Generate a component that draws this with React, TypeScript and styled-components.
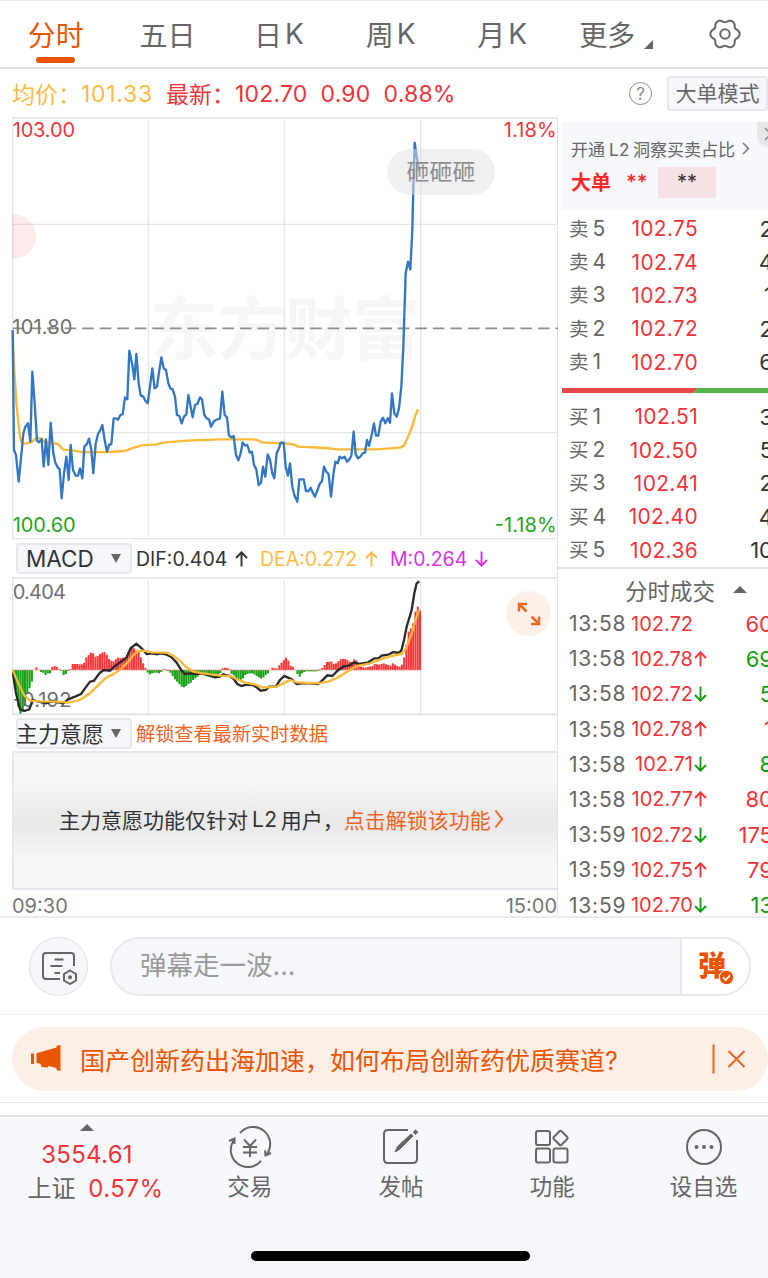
import React from "react";
import styled, { createGlobalStyle } from "styled-components";

const tabs = ["分时", "五日", "日K", "周K", "月K"];

const sellData = [
  { id: 5, price: "102.75", vol: "2" },
  { id: 4, price: "102.74", vol: "4" },
  { id: 3, price: "102.73", vol: "1" },
  { id: 2, price: "102.72", vol: "2" },
  { id: 1, price: "102.70", vol: "6" },
];

const buyData = [
  { id: 1, price: "102.51", vol: "3" },
  { id: 2, price: "102.50", vol: "5" },
  { id: 3, price: "102.41", vol: "2" },
  { id: 4, price: "102.40", vol: "4" },
  { id: 5, price: "102.36", vol: "10" },
];

const dealData = [
  { id: 1, time: "13:58", price: "102.72", dir: "", vol: "60", up: true },
  { id: 2, time: "13:58", price: "102.78", dir: "up", vol: "69", up: false },
  { id: 3, time: "13:58", price: "102.72", dir: "down", vol: "5", up: false },
  { id: 4, time: "13:58", price: "102.78", dir: "up", vol: "1", up: true },
  { id: 5, time: "13:58", price: "102.71", dir: "down", vol: "8", up: false },
  { id: 6, time: "13:58", price: "102.77", dir: "up", vol: "80", up: true },
  { id: 7, time: "13:59", price: "102.72", dir: "down", vol: "175", up: true },
  { id: 8, time: "13:59", price: "102.75", dir: "up", vol: "79", up: true },
  { id: 9, time: "13:59", price: "102.70", dir: "down", vol: "13", up: false },
];

const pricePoints =
  "38,150 42,510 48,525 56,605 64,525 70,460 76,440 84,430 91,485 97,275 104,370 111,482 117,487 125,478 131,560 138,478 145,555 152,428 160,520 166,548 173,562 179,568 185,655 192,580 199,530 206,600 212,495 219,570 227,587 234,587 240,565 247,595 253,500 260,493 267,476 274,510 280,580 287,492 294,462 301,450 307,435 314,480 321,515 328,493 334,493 341,415 348,415 354,419 361,405 368,403 375,352 382,358 388,212 397,255 403,298 409,222 416,310 422,346 430,350 436,362 443,370 450,320 457,265 464,325 471,320 478,270 484,232 491,265 498,270 505,310 511,325 518,328 525,350 531,405 538,408 545,430 552,410 559,403 565,345 572,380 578,412 585,375 592,372 600,352 606,358 613,405 620,415 627,418 633,440 641,425 648,420 660,415 667,335 674,405 681,412 687,467 694,472 701,468 708,525 715,541 722,520 728,487 735,497 742,495 749,518 756,515 762,555 769,568 776,615 783,608 789,560 796,590 803,523 810,540 817,580 823,595 830,520 837,505 842,488 851,488 857,560 864,587 870,550 877,620 884,648 892,665 898,598 911,598 918,633 926,633 932,623 938,638 945,650 952,632 959,612 966,603 972,560 979,575 986,583 993,650 1000,585 1006,545 1013,550 1019,530 1026,535 1034,530 1041,545 1048,538 1054,528 1061,455 1067,523 1074,535 1081,530 1088,520 1095,518 1101,480 1107,498 1115,465 1122,430 1128,467 1135,467 1142,425 1149,413 1156,430 1163,415 1170,428 1176,340 1183,400 1190,410 1197,385 1204,320 1210,200 1217,-20 1224,-55 1231,-32 1237,-150 1240,-280 1244,-412 1250,-370 1257,-328";

const avgPoints =
  "38,160 42,260 50,380 60,470 66,492 90,488 110,475 125,475 135,488 175,492 188,508 215,511 255,517 320,516 375,513 395,505 425,496 470,493 490,488 560,482 660,478 760,478 774,481 785,487 860,491 880,493 895,500 980,504 1010,508 1060,508 1130,508 1200,503 1212,497 1220,480 1235,445 1245,410 1252,392 1258,390";

const difPoints =
  "38,395 48,460 60,508 72,513 88,508 98,480 115,485 138,490 155,484 170,486 190,490 205,478 225,470 243,462 255,445 270,425 282,422 300,398 312,390 330,392 345,378 362,366 380,352 392,325 409,311 425,325 440,342 458,340 470,343 480,340 498,343 515,352 530,368 545,392 555,402 570,400 590,402 605,400 625,406 645,412 660,410 670,403 690,408 702,418 712,432 725,438 740,434 758,435 770,442 782,452 797,450 808,440 828,440 840,420 853,408 875,418 890,432 905,430 930,430 955,432 970,418 982,406 997,408 1015,390 1030,380 1048,376 1063,367 1078,372 1105,367 1123,355 1135,355 1145,347 1165,344 1180,336 1195,339 1204,332 1212,300 1220,260 1235,210 1243,160 1250,130 1258,124";

const deaPoints =
  "38,390 55,430 72,465 90,482 120,484 170,485 205,488 240,480 270,460 300,430 320,412 345,400 365,385 385,365 400,345 415,333 430,332 455,337 500,338 520,347 540,363 560,382 580,395 610,400 660,407 690,408 712,418 735,428 760,432 790,443 830,440 850,430 870,420 890,427 955,430 985,425 1015,412 1050,390 1070,378 1110,370 1150,355 1175,348 1205,342 1218,325 1235,280 1250,230 1258,208";

// one value per minute, above zero is red and below is green
const macdBars = [
  -10, -60, -110, -131, -120, -108, -70, -55, -35, 0, 8, 0, -6, -8, -15, -10,
  -10, 9, 12, 9, 2, -3, -15, -12, -3, 3, 18, 18, 18, 17, 17, 22, 38, 45, 52, 50,
  40, 42, 48, 52, 54, 46, 33, 28, 26, 32, 37, 36, 37, 36, 45, 55, 65, 65, 58, 55,
  38, 20, 6, -8, -13, -10, -8, -8, -10, -6, 2, 2, -3, -8, -18, -28, -35, -42,
  -50, -52, -48, -42, -38, -30, -25, -20, -12, -8, -10, -12, -12, -12, -12, -12,
  -12, -10, 5, 7, 6, 3, -12, -16, -24, -28, -30, -25, -15, -12, -10, -10, -13,
  -18, -22, -26, -22, -15, -10, 0, 7, 5, 4, 14, 22, 30, 37, 28, 13, 10, 0, -12,
  -20, -10, -6, -4, -4, -4, -4, -4, -3, 2, 6, 15, 24, 25, 25, 18, 20, 26, 32, 33,
  33, 30, 25, 24, 32, 28, 18, 10, 8, 7, 9, 10, 12, 18, 17, 16, 18, 20, 17, 15,
  13, 20, 16, 12, 10, 16, 38, 75, 115, 125, 140, 175, 190, 178,
];

const gearPath =
  Array.from({ length: 72 }, (_, i) => {
    const a = (i * Math.PI) / 36;
    const r = 13.3 + 1.5 * Math.cos(6 * a) - 0.15 * Math.cos(12 * a);
    const x = (17 + r * Math.cos(a)).toFixed(2);
    const y = (17 + r * Math.sin(a)).toFixed(2);
    return `${i ? "L" : "M"}${x} ${y}`;
  }).join("") + "Z";

const Arrow = ({ dir }: { dir: string }) => (
  <ArrowSvg width="13" height="16" viewBox="0 0 13 16">
    <path
      d={
        dir === "up"
          ? "M6.5 15.5V1.5M1 7L6.5 1.3L12 7"
          : "M6.5 .5V14.5M1 9L6.5 14.7L12 9"
      }
    />
  </ArrowSvg>
);

const PriceChart = () => (
  <svg width="546" height="422" viewBox="36 354 1638 1266">
    <g stroke="#e5e5f0" strokeWidth="4">
      <path d="M36 354H1674M36 673H1674M36 1298H1674M36 1616H1674" />
      <path d="M38 354V1616M445 362V1608M853 362V1608M1262 362V1608" />
    </g>
    <Watermark x="452" y="1062" textLength="808">
      东方财富
    </Watermark>
    <path
      d="M38 985H1674"
      stroke="#8e8e8e"
      strokeWidth="5"
      strokeDasharray="35 17.6"
      strokeDashoffset="2"
    />
    <Mark x="37" y="1001" fill="#707070" textLength="180">
      101.80
    </Mark>
    <g transform="translate(0 840)" fill="none" strokeLinejoin="round">
      <polyline points={avgPoints} stroke="#fbb936" strokeWidth="7" />
      <polyline points={pricePoints} stroke="#3377c4" strokeWidth="7" />
    </g>
    <Mark x="38" y="411" fill="#f03438" textLength="187">
      103.00
    </Mark>
    <Mark x="1511" y="411" fill="#f03438" textLength="159">
      1.18%
    </Mark>
    <Mark x="38" y="1595" fill="#1fa51f" textLength="189">
      100.60
    </Mark>
    <Mark x="1484" y="1595" fill="#1fa51f" textLength="186">
      -1.18%
    </Mark>
  </svg>
);

const MacdChart = () => (
  <svg width="546" height="140" viewBox="36 1728 1638 420">
    <g transform="translate(0 1617)" fill="none">
      <path d="M36 113H1674M36 523H1674" stroke="#e2e2ec" strokeWidth="5" />
      <path
        d="M38 111V522M445 118V522M853 118V522M1262 118V522"
        stroke="#e5e5f0"
        strokeWidth="4"
      />
      <Mark x="38" y="176" fill="#707070" textLength="160">
        0.404
      </Mark>
      {macdBars.map((v, i) => (
        <rect
          key={i}
          x={38 + i * 6.81}
          y={v > 0 ? 390 - v : 390}
          width="6.3"
          height={Math.abs(v)}
          fill={v > 0 ? "#f5393c" : "#17a317"}
        />
      ))}
      <path d="M38 390H1262" stroke="#f08a80" strokeWidth="2" />
      <Mark x="38" y="501" fill="#707070" textLength="176">
        -0.192
      </Mark>
      <polyline points={difPoints} stroke="#2b2b2b" strokeWidth="7" />
      <polyline points={deaPoints} stroke="#fbb936" strokeWidth="7" />
    </g>
  </svg>
);

const App = () => {
  return (
    <Screen>
      <GlobalStyle />
      <Tabs>
        {tabs.map((t, i) => (
          <Tab key={t} $active={i === 0}>
            {t[0]}
            {t[1] === "K" ? <K>K</K> : t[1]}
          </Tab>
        ))}
        <Tab $active={false}>
          <More>更多</More>
          <Corner width="9" height="9" viewBox="0 0 9 9">
            <path d="M9 0V9H0Z" fill="#666" />
          </Corner>
        </Tab>
        <Tab $active={false}>
          <svg width="34" height="34" viewBox="0 0 34 34" fill="none">
            <path d={gearPath} stroke="#666" strokeWidth="2" />
            <circle cx="17" cy="17" r="4.700" stroke="#666" strokeWidth="2" />
          </svg>
        </Tab>
      </Tabs>

      <PriceBar>
        <AvgPrice>均价：</AvgPrice>
        <AvgNum>101.33</AvgNum>
        <LastPrice>最新：</LastPrice>
        <LastNum>102.70</LastNum>
        <LastNum>0.90</LastNum>
        <LastNum>0.88%</LastNum>
        <Help>?</Help>
        <ModeButton>大单模式</ModeButton>
      </PriceBar>

      <Main>
        <Left>
          <PriceChart />
          <Danmu>砸砸砸</Danmu>
          <PinkDot />
          <Indicator>
            <Select $pad={8}>
              MACD
              <Down />
            </Select>
            <Value $color="#333" $w={112}>
              DIF:0.404 <Arrow dir="up" />
            </Value>
            <Value $color="#fcbb42" $w={118}>
              DEA:0.272 <Arrow dir="up" />
            </Value>
            <Value $color="#d932e0" $w={98}>
              M:0.264 <Arrow dir="down" />
            </Value>
          </Indicator>
          <ChartBox>
            <MacdChart />
            <Expand>
              <svg width="24" height="24" viewBox="0 0 24 24" fill="none">
                <path
                  d="M2 9.500V2H10M2.500 2.500L9.500 9.500M22 14.500V22H14M21.500 21.500L14.500 14.500"
                  stroke="#ee6420"
                  strokeWidth="2.500"
                />
              </svg>
            </Expand>
          </ChartBox>
          <Indicator2>
            <Select $pad={0}>
              <SelectText>主力意愿</SelectText>
              <Down />
            </Select>
            <Unlock>解锁查看最新实时数据</Unlock>
          </Indicator2>
          <Locked>
            主力意愿功能仅针对<Latin>L2</Latin>用户，
            <LockedLink>点击解锁该功能</LockedLink>
            <svg width="10" height="20" viewBox="0 0 10 20" fill="none">
              <path d="M1.500 1.500L8 10L1.500 18.500" stroke="#ee6420" strokeWidth="2" />
            </svg>
          </Locked>
          <Times>
            <span>09:30</span>
            <span>15:00</span>
          </Times>
        </Left>

        <Right>
          <L2Box>
            <L2Title>
              <span>
                开通<Latin>L2</Latin>洞察买卖占比
              </span>
              <svg width="8" height="13" viewBox="0 0 8 13" fill="none">
                <path d="M1 1L6.500 6.500L1 12" stroke="#777" strokeWidth="1.500" />
              </svg>
            </L2Title>
            <L2Row>
              <BigOrder>大单</BigOrder>
              <Stars>**</Stars>
              <StarBox>**</StarBox>
            </L2Row>
            <CloseTab>
              <svg width="12" height="14" viewBox="0 0 12 14" fill="none">
                <path d="M1 1L7 7L1 13M12 2L7 7L12 12" stroke="#888" strokeWidth="1.500" />
              </svg>
            </CloseTab>
          </L2Box>
          <Book>
            {sellData.map(({ id, price, vol }) => (
              <BookRow key={id}>
                <Level>
                  卖<i>{id}</i>
                </Level>
                <BookPrice>{price}</BookPrice>
                <Vol $color="#333">{vol}</Vol>
              </BookRow>
            ))}
          </Book>
          <Ratio viewBox="0 0 206 5" width="206" height="5">
            <path d="M0 0H136L131 5H0Z" fill="#e5474b" />
            <path d="M136 0H206V5H131Z" fill="#55b544" />
          </Ratio>
          <Book>
            {buyData.map(({ id, price, vol }) => (
              <BookRow key={id}>
                <Level>
                  买<i>{id}</i>
                </Level>
                <BookPrice>{price}</BookPrice>
                <Vol $color="#333">{vol}</Vol>
              </BookRow>
            ))}
          </Book>
          <DealTitle>
            分时成交
            <Up />
          </DealTitle>
          {dealData.map(({ id, time, price, dir, vol, up }) => (
            <DealRow key={id}>
              <Time>{time}</Time>
              <DealPrice>{price}</DealPrice>
              <DirCell $up={dir === "up"}>{dir ? <Arrow dir={dir} /> : null}</DirCell>
              <Vol $color={up ? "#f03438" : "#12a012"}>{vol}</Vol>
            </DealRow>
          ))}
        </Right>
      </Main>

      <CommentBar>
        <RoundButton>
          <svg width="38" height="34" viewBox="0 0 38 34" fill="none" stroke="#666" strokeWidth="2">
            <path d="M20 28H6Q3 28 3 25V5Q3 2 6 2H31Q34 2 34 5V15" />
            <path d="M14.500 8.500H23.500M10.500 15H22.500M14.500 22H20" />
            <path d="M30 19.500L36 23V29.500L30 33L24 29.500V23Z" />
            <circle cx="30" cy="26.300" r="2" fill="#666" stroke="none" />
          </svg>
        </RoundButton>
        <Input>
          <Placeholder>弹幕走一波...</Placeholder>
          <Send>
            弹
            <Check width="15" height="15" viewBox="0 0 15 15">
              <circle cx="7.500" cy="7.500" r="7.200" fill="#ea5504" stroke="#fff" />
              <path d="M4 7.500L6.700 10L11 5.300" fill="none" stroke="#fff" strokeWidth="1.800" />
            </Check>
          </Send>
        </Input>
      </CommentBar>

      <BannerWrap>
        <Banner>
          <svg width="31" height="28" viewBox="0 0 31 28" fill="#ea5504">
            <path d="M0 8.500H3V19H0ZM5.500 8.300L25.500 2.500V0.800L29.500 0V26L25.500 25V23L18 21L16.500 22.500L10.500 22L9.500 18.800L5.500 18Z" />
          </svg>
          <BannerText>国产创新药出海加速，如何布局创新药优质赛道?</BannerText>
          <svg width="34" height="30" viewBox="0 0 34 30" fill="none" stroke="#ea6226">
            <path d="M1.500 .5V29.500" strokeWidth="2" />
            <path d="M16.500 7L32.500 23M32.500 7L16.500 23" strokeWidth="2" />
          </svg>
        </Banner>
      </BannerWrap>

      <Footer>
        <Index>
          <Up />
          <IndexNum>3554.61</IndexNum>
          <IndexRow>
            上证 <b>0.57%</b>
          </IndexRow>
        </Index>
        <NavItem>
          <svg width="42" height="38" viewBox="0 0 42 38" fill="none" stroke="#666" strokeWidth="2">
            <path d="M11 5.200A17 17 0 0 1 37.500 26.500M42 25L36.500 27.500L36 22.500" />
            <path d="M32 32.800A17 17 0 0 1 5.500 11.500M0 13L5.500 10.500V16" />
            <path d="M15 11.500L21 18L27 11.500M21 18V29M14 19H28M14 24.500H28" />
          </svg>
          交易
        </NavItem>
        <NavItem>
          <svg width="38" height="38" viewBox="0 0 38 38" fill="none" stroke="#666" strokeWidth="2">
            <path d="M26 2H6Q2 2 2 6V31Q2 35 6 35H31Q35 35 35 31V12" />
            <path d="M13 24L15.500 18.500L29 6L31 8L17.500 21.500Z" fill="#666" strokeWidth="1" />
            <path d="M32 5.500L35 2.800" strokeWidth="4" />
          </svg>
          发帖
        </NavItem>
        <NavItem>
          <svg width="38" height="38" viewBox="0 0 38 38" fill="none" stroke="#666" strokeWidth="2">
            <rect x="3" y="3" width="14" height="14" rx="2" />
            <rect x="3" y="20.500" width="14" height="14" rx="2" />
            <rect x="20.500" y="20.500" width="14" height="14" rx="2" />
            <rect x="22" y="4.500" width="11" height="11" rx="1.500" transform="rotate(45 27.500 10)" />
          </svg>
          功能
        </NavItem>
        <NavItem>
          <svg width="38" height="38" viewBox="0 0 38 38" fill="none">
            <circle cx="19" cy="19" r="17" stroke="#666" strokeWidth="2" />
            <path d="M11.500 19H11.510M19 19H19.010M26.500 19H26.510" stroke="#666" strokeWidth="4" strokeLinecap="round" />
          </svg>
          设自选
        </NavItem>
        <HomeBar />
      </Footer>
    </Screen>
  );
};

export default App;

const GlobalStyle = createGlobalStyle`
  body {
    margin: 0;
    background: #fff;
  }
  * {
    box-sizing: border-box;
  }
  svg {
    display: block;
    flex-shrink: 0;
  }
`;

const Screen = styled.div`
  width: 768px;
  height: 1278px;
  overflow: hidden;
  display: flex;
  flex-direction: column;
  background: #fff;
  color: #666;
  white-space: nowrap;
  font-family: Inter, "Noto Sans CJK SC", sans-serif;
`;

const Tabs = styled.div`
  height: 69px;
  flex-shrink: 0;
  display: grid;
  grid-template-columns: repeat(7, 111.6px);
  border-top: 1px solid #ebebee;
  border-bottom: 2px solid #e2e2ea;
`;

const Tab = styled.div<{ $active: boolean }>`
  position: relative;
  display: flex;
  align-items: center;
  justify-content: center;
  font-size: 28px;
  color: ${({ $active }) => ($active ? "#ea5504" : "#666")};

  &::after {
    content: "";
    display: ${({ $active }) => ($active ? "block" : "none")};
    position: absolute;
    bottom: 4px;
    width: 39px;
    height: 6px;
    border-radius: 3px;
    background: #ea5504;
  }
`;

const K = styled.span`
  margin-left: 3px;
`;

const More = styled.span`
  margin-left: 5px;
`;

const Corner = styled.svg`
  margin: 20px 0 0 9px;
`;

const PriceBar = styled.div`
  height: 49px;
  flex-shrink: 0;
  display: flex;
  align-items: center;
  padding-left: 12px;
  font-size: 23px;
`;

const AvgPrice = styled.div`
  color: #fcbb42;
  width: 69px;
  padding-bottom: 2px;
`;

const AvgNum = styled.div`
  color: #fcbb42;
  width: 85px;
  letter-spacing: 0.7px;
`;

const LastPrice = styled.div`
  color: #f03438;
  width: 69px;
  padding-bottom: 2px;
`;

const LastNum = styled.div`
  color: #f03438;
  margin-right: 13px;
  letter-spacing: 0.2px;
`;

const Help = styled.div`
  margin-left: auto;
  margin-right: 15px;
  width: 23px;
  height: 23px;
  border: 1.5px solid #888;
  border-radius: 50%;
  display: flex;
  align-items: center;
  justify-content: center;
  font-size: 17px;
  color: #888;
`;

const ModeButton = styled.div`
  width: 101px;
  height: 35px;
  padding-bottom: 3px;
  display: flex;
  align-items: center;
  justify-content: center;
  border: 2px solid #e6e8ee;
  border-radius: 4px;
  background: #f6f7fa;
  font-size: 21px;
`;

const Main = styled.div`
  height: 800px;
  flex-shrink: 0;
  display: flex;
  border-bottom: 2px solid #ececf0;
`;

const Left = styled.div`
  position: relative;
  width: 558px;
  flex-shrink: 0;
  padding-left: 12px;
  border-right: 1px solid #e0e0ec;

  > svg {
    overflow: visible;
  }
`;

const Watermark = styled.text`
  font-family: "Noto Sans CJK SC", sans-serif;
  font-size: 204px;
  font-weight: 700;
  fill: #f6f6f6;
`;

const Mark = styled.text`
  font-size: 60px;
  stroke: none;
`;

const Danmu = styled.div`
  position: absolute;
  left: 387px;
  top: 31px;
  width: 108px;
  height: 46px;
  border-radius: 23px;
  background: rgba(226, 226, 226, 0.5);
  color: #8c8c8c;
  font-size: 23px;
  line-height: 46px;
  text-align: center;
`;

const PinkDot = styled.div`
  position: absolute;
  left: 12px;
  top: 96px;
  width: 24px;
  height: 45px;
  border-radius: 0 23px 23px 0;
  background: rgba(240, 52, 56, 0.1);
`;

const Indicator = styled.div`
  height: 37px;
  display: flex;
  align-items: center;
  padding-left: 4px;
  font-size: 20px;
`;

const Indicator2 = styled(Indicator)`
  height: 36px;
  margin-top: -2px;
`;

const Select = styled.div<{ $pad: number }>`
  width: 116px;
  height: 31px;
  margin-right: 4px;
  display: flex;
  align-items: center;
  justify-content: space-between;
  padding: 0 9px 0 ${({ $pad }) => $pad}px;
  border: 2px solid #e6e8ee;
  border-radius: 4px;
  background: #f6f7fa;
  color: #333;
  font-size: 22.500px;
`;

const SelectText = styled.span`
  margin-left: -2px;
  padding-bottom: 2px;
  font-size: 22px;
`;

const Down = styled.i`
  border: 5px solid transparent;
  border-top: 9px solid #666;
  border-bottom: 0;
`;

const Up = styled.i`
  border: 7px solid transparent;
  border-bottom: 7px solid #666;
  border-top: 0;
`;

const Value = styled.div<{ $color: string; $w: number }>`
  display: flex;
  justify-content: space-between;
  align-items: center;
  width: ${({ $w }) => $w}px;
  margin-right: 12px;
  color: ${({ $color }) => $color};
  font-size: 19.500px;
`;

const ArrowSvg = styled.svg`
  fill: none;
  stroke: currentColor;
  stroke-width: 1.900;
`;

const ChartBox = styled.div`
  position: relative;
`;

const Expand = styled.div`
  position: absolute;
  right: 6px;
  top: 14px;
  width: 45px;
  height: 45px;
  border-radius: 50%;
  background: #fdf0e9;
  display: flex;
  align-items: center;
  justify-content: center;
`;

const Unlock = styled.div`
  font-size: 19.200px;
  color: #ee6420;
`;

const Locked = styled.div`
  height: 139px;
  display: flex;
  align-items: center;
  padding: 0 0 3px 45px;
  border: 2px solid #e6e6ee;
  border-right: 0;
  background: linear-gradient(
    #f7f7f7 0%,
    #f7f7f7 20%,
    #e9e9e9 48%,
    #e9e9e9 54%,
    #f7f7f7 80%,
    #f7f7f7 100%
  );
  color: #333;
  font-size: 21px;
`;

const LockedLink = styled.span`
  color: #ee6420;
  margin-right: 3px;
`;

const Latin = styled.span`
  margin: 0 3px 0 4px;
  letter-spacing: 0.5px;
`;

const Times = styled.div`
  height: 31px;
  display: flex;
  align-items: center;
  justify-content: space-between;
  color: #777;
  font-size: 20px;
`;

const Right = styled.div`
  flex: 1;
  overflow: hidden;
  padding-left: 4px;
`;

const L2Box = styled.div`
  position: relative;
  height: 88px;
  margin-top: 4px;
  margin-left: -1px;
  padding: 13px 0 0 10px;
  background: #f7f8fb;
`;

const L2Title = styled.div`
  display: flex;
  align-items: center;
  gap: 7px;
  height: 26px;
  font-size: 17px;
`;

const L2Row = styled.div`
  display: flex;
  align-items: center;
  height: 42px;
  font-size: 20px;
`;

const BigOrder = styled.div`
  font-weight: 700;
  color: #fb2a2a;
  padding-bottom: 2px;
`;

const Stars = styled.div`
  margin-left: 15px;
  width: 32px;
  color: #fb2a2a;
  font-weight: 600;
`;

const StarBox = styled.div`
  width: 58px;
  height: 31px;
  line-height: 31px;
  text-align: center;
  background: #f6e2e5;
  color: #333;
`;

const CloseTab = styled.div`
  position: absolute;
  right: 0;
  top: 0;
  width: 11px;
  height: 25px;
  padding: 5px 0 0 7px;
  border-radius: 0 0 0 12px;
  background: #e6e7e9;
  overflow: hidden;
`;

const Book = styled.div`
  padding-top: 2px;
`;

const BookRow = styled.div`
  display: flex;
  align-items: center;
  width: 211px;
  height: 33.400px;
  padding-left: 7px;
  font-size: 21px;
`;

const Level = styled.div`
  width: 61px;
  font-size: 19.500px;
  padding-bottom: 3px;

  i {
    font-style: normal;
    font-size: 21px;
    margin-left: 4px;
  }
`;

const BookPrice = styled.div`
  width: 68px;
  display: flex;
  justify-content: flex-end;
  letter-spacing: 0.3px;
  color: #f03438;
`;

const Vol = styled.div<{ $color: string }>`
  flex: 1;
  text-align: right;
  font-size: 22px;
  color: ${({ $color }) => $color};
`;

const Ratio = styled.svg`
  margin: 9px 0 5px;
`;

const DealTitle = styled.div`
  height: 39px;
  margin: 0 0 0 -4px;
  padding: 5px 0 0 67px;
  display: flex;
  align-items: center;
  gap: 18px;
  border-top: 2px solid #e2e2ea;
  font-size: 22.500px;
`;

const DealRow = styled.div`
  display: flex;
  align-items: center;
  width: 211px;
  height: 35.200px;
  padding-left: 7px;
  font-size: 21px;
`;

const Time = styled.div`
  width: 57px;
  letter-spacing: 0.8px;
`;

const DealPrice = styled.div`
  width: 67px;
  text-align: right;
  font-size: 20px;
  color: #f03438;
`;

const DirCell = styled.div<{ $up: boolean }>`
  width: 14px;
  margin-left: 1px;
  color: ${({ $up }) => ($up ? "#f03438" : "#12a012")};
`;

const CommentBar = styled.div`
  height: 97px;
  flex-shrink: 0;
  display: flex;
  align-items: center;
  gap: 22px;
  padding-left: 29px;
  border-bottom: 1px solid #f4f4f6;
`;

const RoundButton = styled.div`
  width: 59px;
  height: 59px;
  padding-top: 3px;
  border-radius: 50%;
  border: 1.500px solid #dfe1e7;
  background: #f6f7fa;
  display: flex;
  align-items: center;
  justify-content: center;
`;

const Input = styled.div`
  width: 641px;
  height: 59px;
  border-radius: 30px;
  border: 2px solid #e8e9ed;
  background: #f6f7fa;
  display: flex;
  justify-content: space-between;
  overflow: hidden;
`;

const Placeholder = styled.div`
  padding-left: 28px;
  line-height: 52px;
  font-size: 26.500px;
  color: #999;
`;

const Send = styled.div`
  position: relative;
  width: 69px;
  padding-left: 16px;
  border-left: 2px solid #e8e9ed;
  background: #fff;
  color: #ea5504;
  font-size: 28px;
  font-weight: 900;
  line-height: 55px;
`;

const Check = styled.svg`
  position: absolute;
  left: 37px;
  top: 31px;
`;

const BannerWrap = styled.div`
  height: 88px;
  flex-shrink: 0;
  padding: 12px 0 0 12px;
  border-bottom: 1px solid #e8e8ec;
`;

const Banner = styled.div`
  width: 756px;
  height: 64px;
  border-radius: 32px;
  background: #fdeee6;
  display: flex;
  align-items: center;
  padding: 0 22px 0 19px;
`;

const BannerText = styled.div`
  flex: 1;
  margin-left: 18px;
  font-size: 25px;
  color: #ea5504;
`;

const Footer = styled.div`
  position: relative;
  margin-top: 12px;
  flex: 1;
  display: grid;
  grid-template-columns: 174px repeat(4, 151.300px);
  border-top: 2px solid #e0e0e8;
  background: #f7f8fb;

  svg {
    overflow: visible;
  }
`;

const Index = styled.div`
  display: flex;
  flex-direction: column;
  align-items: center;
  padding-top: 7px;
  font-size: 24px;
`;

const IndexNum = styled.div`
  margin-top: 8px;
  line-height: 32px;
  color: #f03438;
  letter-spacing: 0.3px;
`;

const IndexRow = styled.div`
  line-height: 36px;
  padding-left: 17px;

  b {
    font-weight: 400;
    color: #f03438;
    margin-left: 6px;
    letter-spacing: 0.5px;
  }
`;

const NavItem = styled.div`
  display: flex;
  flex-direction: column;
  align-items: center;
  padding-top: 11px;
  font-size: 22.500px;
  line-height: 41px;
`;

const HomeBar = styled.div`
  position: absolute;
  left: 251px;
  top: 134px;
  width: 279px;
  height: 10px;
  border-radius: 5px;
  background: #000;
`;
